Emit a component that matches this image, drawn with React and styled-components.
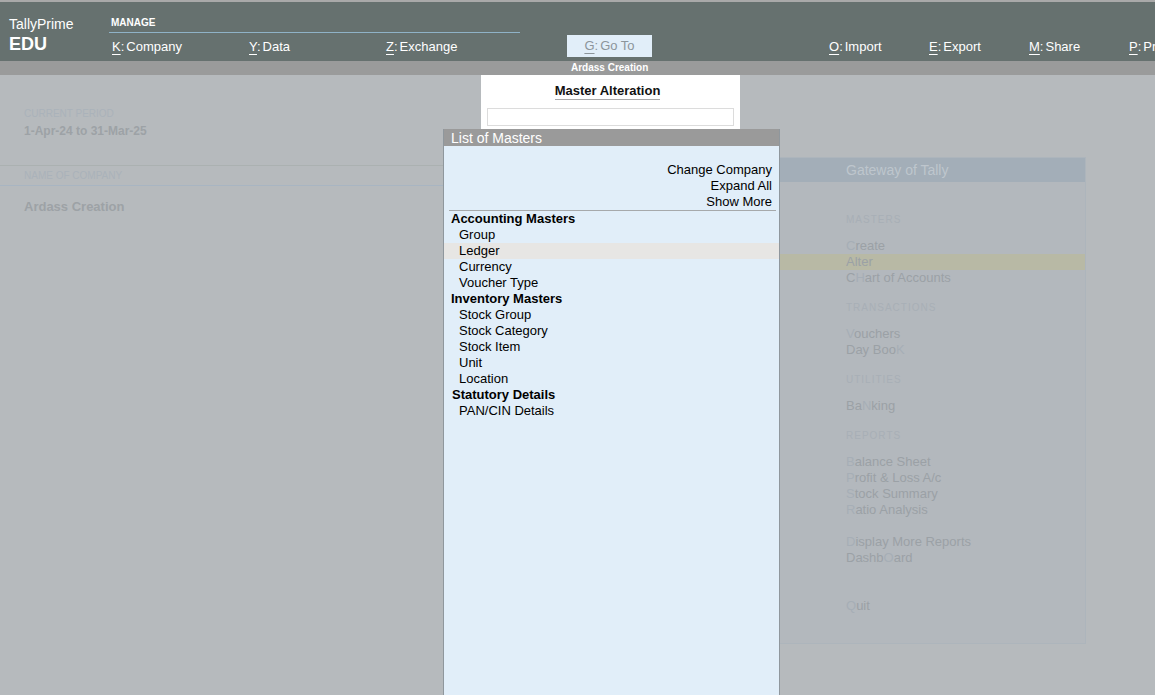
import React from "react";
import styled, { createGlobalStyle } from "styled-components";

const Global = createGlobalStyle`
  html, body { margin: 0; padding: 0; height: 100%; overflow: hidden; }
  body { font-family: "Liberation Sans", Arial, sans-serif; background: #b6babd; }
  #root { height: 100%; }
`;

const Page = styled.div`
  height: 100vh;
  display: flex;
  flex-direction: column;
  background: #b6babd;
  overflow: hidden;
`;

const TopBar = styled.header`
  height: 59px;
  border-top: 2px solid #a9a9a9;
  background: #66716f;
  display: flex;
  align-items: flex-start;
  white-space: nowrap;
  overflow: hidden;
  color: #fff;
  flex: none;
`;

const Brand = styled.div`
  width: 100px;
  padding: 14px 0 0 9px;
  flex: none;
`;

const BrandName = styled.div`
  font-size: 14px;
  line-height: 16px;
`;

const BrandEdition = styled.div`
  font-size: 18px;
  font-weight: bold;
  line-height: 20px;
  margin-top: 2px;
`;

const ManageGroup = styled.div`
  width: 411px;
  padding-top: 15px;
  flex: none;
`;

const GroupTitle = styled.div`
  font-size: 10px;
  font-weight: bold;
  line-height: 12px;
  padding: 0 0 3px 2px;
  border-bottom: 1px solid #8fb2c7;
`;

const MenuRow = styled.div`
  display: flex;
  margin-top: ${(p) => p.$top}px;
  margin-left: ${(p) => p.$left}px;
  flex: none;
`;

const MenuItem = styled.div`
  width: ${(p) => p.$w}px;
  font-size: 13px;
  line-height: 16px;
  flex: none;
`;

const Key = styled.span`
  text-decoration: underline;
  text-underline-offset: 3px;
`;

const Label = styled.span`
  margin-left: 2px;
`;

const GoTo = styled.div`
  margin: 33px 0 0 47px;
  width: 85px;
  height: 22px;
  line-height: 22px;
  background: #e1eef9;
  color: #8c959b;
  font-size: 13px;
  text-align: center;
  flex: none;
`;

const SubBar = styled.div`
  height: 14px;
  background: #9a9b9b;
  color: #fff;
  font-size: 10px;
  font-weight: bold;
  line-height: 14px;
  padding-left: 571px;
  flex: none;
`;

const Main = styled.main`
  position: relative;
  flex: 1;
  display: flex;
  align-items: flex-start;
`;

const InfoColumn = styled.div`
  width: 780px;
  flex: none;
`;

const InfoBlock = styled.div`
  height: ${(p) => p.$h}px;
  box-sizing: border-box;
  padding: ${(p) => p.$pt}px 24px 0;
  border-bottom: ${(p) => (p.$line ? `1px solid ${p.$line}` : "none")};
`;

const InfoLabel = styled.div`
  font-size: 10px;
  line-height: ${(p) => p.$lh || 13}px;
  color: #aab2ba;
`;

const InfoValue = styled.div`
  font-size: ${(p) => p.$size}px;
  font-weight: bold;
  line-height: 16px;
  margin-top: ${(p) => p.$mt || 0}px;
  color: #9da2a6;
`;

const Gateway = styled.section`
  margin-top: 82px;
  width: 306px;
  height: 487px;
  box-sizing: border-box;
  border: 1px solid #adb5bc;
  border-left: none;
  background: #b3b8bd;
  flex: none;
`;

const GatewayHead = styled.div`
  height: 24px;
  line-height: 24px;
  background: #a3aeb8;
  color: #bec6cd;
  font-size: 14px;
  padding-left: 66px;
`;

const GatewayBody = styled.div`
  padding-top: 16px;
`;

const SectionHead = styled.div`
  font-size: 10px;
  letter-spacing: 1px;
  color: #a8afb6;
  line-height: 16px;
  padding-left: 66px;
  margin: 14px 0 10px;
`;

const GItem = styled.div`
  font-size: 13px;
  line-height: 16px;
  color: #9ba1a6;
  padding-left: 66px;
  margin-top: ${(p) => p.$gap || 0}px;
  background: ${(p) => (p.$active ? "#b8b9a5" : "transparent")};
`;

const Hot = styled.span`
  color: #a6aeb6;
`;

const AlterDialog = styled.div`
  position: absolute;
  left: 481px;
  top: 0;
  width: 259px;
  height: 56px;
  background: #fff;
  padding-top: 8px;
  box-sizing: border-box;
  display: flex;
  flex-direction: column;
  align-items: center;
`;

const DialogTitle = styled.div`
  font-size: 13px;
  font-weight: bold;
  line-height: 16px;
  color: #111;
  border-bottom: 1px solid #a8a8a8;
  margin-left: -6px;
`;

const DialogInput = styled.div`
  margin-top: 8px;
  width: 247px;
  height: 18px;
  box-sizing: border-box;
  border: 1px solid #dcdcdc;
`;

const ListPanel = styled.div`
  position: absolute;
  left: 443px;
  top: 54px;
  bottom: 0;
  width: 337px;
  box-sizing: border-box;
  border-left: 1px solid #8f979d;
  border-right: 1px solid #8f979d;
  background: #e1eef9;
`;

const ListHead = styled.div`
  height: 17px;
  line-height: 18px;
  background: #9a9a9a;
  color: #fff;
  font-size: 14px;
  padding-left: 7px;
`;

const ListBody = styled.div`
  padding-top: 16px;
  color: #000;
  font-size: 13px;
`;

const ActionRow = styled.div`
  text-align: right;
  line-height: 16px;
  padding-right: 7px;
`;

const Separator = styled.div`
  margin: 0 3px 0 5px;
  border-top: 1px solid #a6a9ab;
`;

const GroupRow = styled.div`
  font-weight: bold;
  line-height: 16px;
  padding-left: ${(p) => p.$indent || 7}px;
`;

const ItemRow = styled.div`
  line-height: 16px;
  padding-left: 15px;
  background: ${(p) => (p.$selected ? "#e7e6e4" : "transparent")};
`;

const leftMenu = [
  ["K", "Company"],
  ["Y", "Data"],
  ["Z", "Exchange"],
];
const rightMenu = [
  ["O", "Import"],
  ["E", "Export"],
  ["M", "Share"],
  ["P", "Print"],
];

const masters = [
  {
    group: "Accounting Masters",
    items: ["Group", "Ledger", "Currency", "Voucher Type"],
  },
  {
    group: "Inventory Masters",
    items: ["Stock Group", "Stock Category", "Stock Item", "Unit", "Location"],
  },
  { group: "Statutory Details", items: ["PAN/CIN Details"], indent: 8 },
];

function Menu({ k, label, w }) {
  return (
    <MenuItem $w={w}>
      <Key>{k}</Key>:<Label>{label}</Label>
    </MenuItem>
  );
}

export default function App() {
  return (
    <Page>
      <Global />
      <TopBar>
        <Brand>
          <BrandName>TallyPrime</BrandName>
          <BrandEdition>EDU</BrandEdition>
        </Brand>
        <ManageGroup>
          <GroupTitle>MANAGE</GroupTitle>
          <MenuRow $top={6} $left={3}>
            {leftMenu.map(([k, l]) => (
              <Menu key={k} k={k} label={l} w={137} />
            ))}
          </MenuRow>
        </ManageGroup>
        <GoTo>
          <Key>G</Key>:<Label>Go To</Label>
        </GoTo>
        <MenuRow $top={37} $left={177}>
          {rightMenu.map(([k, l]) => (
            <Menu key={k} k={k} label={l} w={100} />
          ))}
        </MenuRow>
      </TopBar>
      <SubBar>Ardass Creation</SubBar>
      <Main>
        <InfoColumn>
          <InfoBlock $h={91} $pt={32} $line="#abb1b1">
            <InfoLabel>CURRENT PERIOD</InfoLabel>
            <InfoValue $size={12} $mt={3}>1-Apr-24 to 31-Mar-25</InfoValue>
          </InfoBlock>
          <InfoBlock $h={20} $pt={0} $line="#a8b5c2">
            <InfoLabel $lh={19}>NAME OF COMPANY</InfoLabel>
          </InfoBlock>
          <InfoBlock $h={40} $pt={13}>
            <InfoValue $size={13}>Ardass Creation</InfoValue>
          </InfoBlock>
        </InfoColumn>
        <Gateway>
          <GatewayHead>Gateway of Tally</GatewayHead>
          <GatewayBody>
            <SectionHead>MASTERS</SectionHead>
            <GItem><Hot>C</Hot>reate</GItem>
            <GItem $active>Alter</GItem>
            <GItem>C<Hot>H</Hot>art of Accounts</GItem>
            <SectionHead>TRANSACTIONS</SectionHead>
            <GItem><Hot>V</Hot>ouchers</GItem>
            <GItem>Day Boo<Hot>K</Hot></GItem>
            <SectionHead>UTILITIES</SectionHead>
            <GItem>Ba<Hot>N</Hot>king</GItem>
            <SectionHead>REPORTS</SectionHead>
            <GItem><Hot>B</Hot>alance Sheet</GItem>
            <GItem><Hot>P</Hot>rofit &amp; Loss A/c</GItem>
            <GItem><Hot>S</Hot>tock Summary</GItem>
            <GItem><Hot>R</Hot>atio Analysis</GItem>
            <GItem $gap={16}><Hot>D</Hot>isplay More Reports</GItem>
            <GItem>Dashb<Hot>O</Hot>ard</GItem>
            <GItem $gap={32}><Hot>Q</Hot>uit</GItem>
          </GatewayBody>
        </Gateway>

        <AlterDialog>
          <DialogTitle>Master Alteration</DialogTitle>
          <DialogInput />
        </AlterDialog>

        <ListPanel>
          <ListHead>List of Masters</ListHead>
          <ListBody>
            <ActionRow>Change Company</ActionRow>
            <ActionRow>Expand All</ActionRow>
            <ActionRow>Show More</ActionRow>
            <Separator />
            {masters.map((m) => (
              <React.Fragment key={m.group}>
                <GroupRow $indent={m.indent}>{m.group}</GroupRow>
                {m.items.map((it) => (
                  <ItemRow key={it} $selected={it === "Ledger"}>
                    {it}
                  </ItemRow>
                ))}
              </React.Fragment>
            ))}
          </ListBody>
        </ListPanel>
      </Main>
    </Page>
  );
}
